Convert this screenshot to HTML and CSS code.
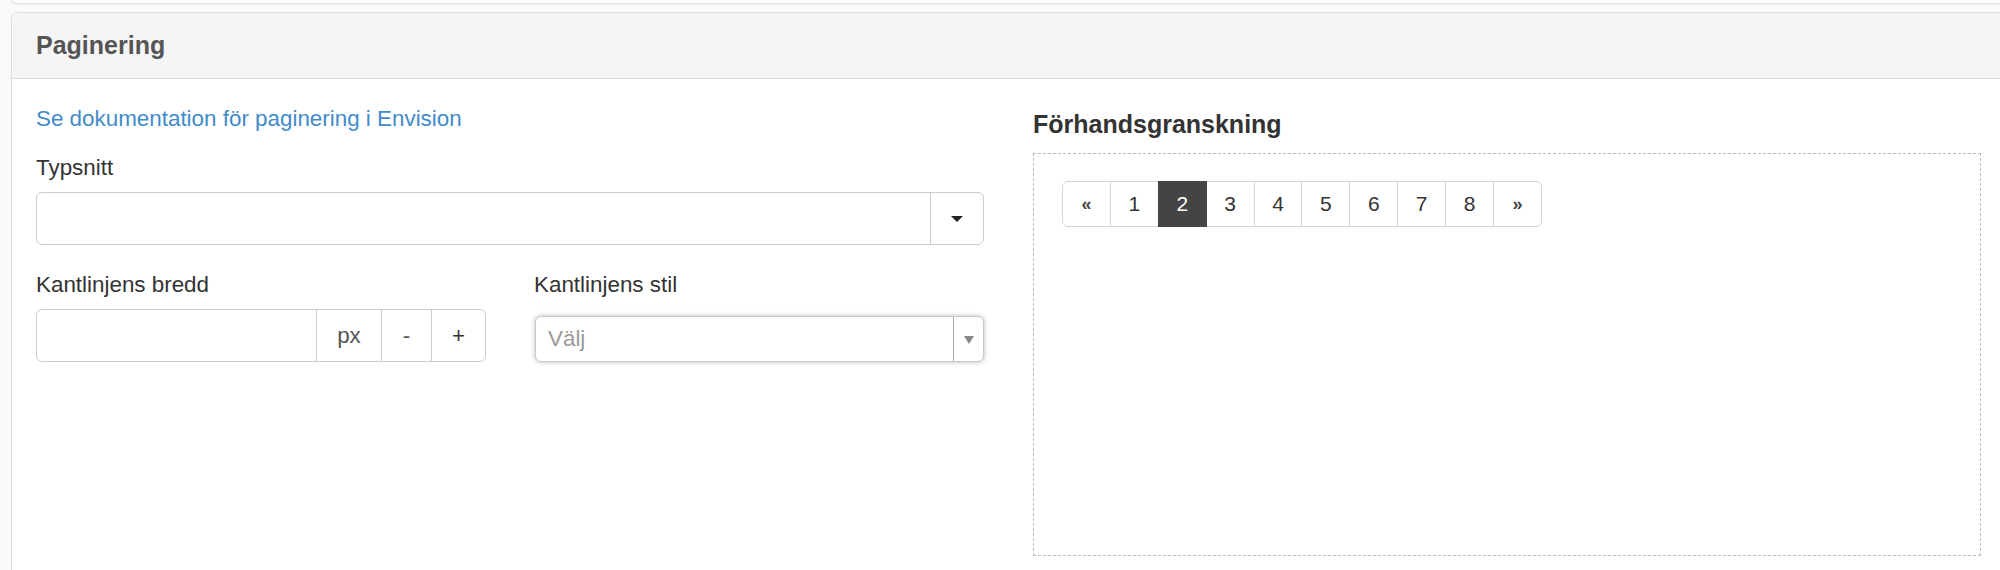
FILE: index.html
```html
<!DOCTYPE html>
<html lang="sv">
<head>
<meta charset="utf-8">
<title>Paginering</title>
<link rel="stylesheet" href="styles.css">
</head>
<body>
<div class="prev-panel"></div>
<section class="panel">
  <div class="panel-heading">Paginering</div>
  <div class="panel-body">
    <div class="col">
      <a class="doc-link" href="#">Se dokumentation för paginering i Envision</a>
      <div class="form-group">
        <label class="lbl">Typsnitt</label>
        <div class="select-box">
          <div class="select-value"></div>
          <div class="select-btn"><span class="caret"></span></div>
        </div>
      </div>
      <div class="form-row">
        <div class="form-group">
          <label class="lbl">Kantlinjens bredd</label>
          <div class="input-group">
            <div class="ig-input"></div>
            <div class="ig-addon ig-px">px</div>
            <div class="ig-addon ig-minus">-</div>
            <div class="ig-addon ig-plus">+</div>
          </div>
        </div>
        <div class="form-group">
          <label class="lbl">Kantlinjens stil</label>
          <div class="chosen">
            <span class="chosen-placeholder">Välj</span>
            <div class="chosen-btn"><span class="chosen-caret"></span></div>
          </div>
        </div>
      </div>
    </div>
    <div class="col">
      <h4 class="preview-title">Förhandsgranskning</h4>
      <div class="preview">
        <ul class="pagination">
          <li class="pg first">«</li>
          <li class="pg">1</li>
          <li class="pg active">2</li>
          <li class="pg">3</li>
          <li class="pg">4</li>
          <li class="pg">5</li>
          <li class="pg">6</li>
          <li class="pg">7</li>
          <li class="pg">8</li>
          <li class="pg last">»</li>
        </ul>
      </div>
    </div>
  </div>
</section>
</body>
</html>
```
FILE: styles.css
```css
html, body {
  margin: 0;
  padding: 0;
  overflow: hidden;
}
body {
  background: #f9f9f9;
  font-family: "Liberation Sans", Arial, Helvetica, sans-serif;
  color: #333;
  width: 2000px;
  height: 570px;
}
.prev-panel {
  margin-left: 11px;
  width: 1996px;
  height: 12px;
  margin-top: -9px;
  background: #fff;
  border: 1px solid #e2e2e2;
  border-top: none;
  border-radius: 0 0 6px 6px;
  box-shadow: 0 1px 2px rgba(0, 0, 0, 0.04);
}
.panel {
  margin: 8px 0 0 11px;
  width: 1996px;
  height: 559px;
  background: #fff;
  border: 1px solid #ddd;
  border-bottom: 0;
  border-radius: 6px 6px 0 0;
  box-sizing: border-box;
  overflow: hidden;
}
.panel-heading {
  background: #f5f5f5;
  border-bottom: 1px solid #ddd;
  padding: 16px 24px;
  height: 33px;
  line-height: 33px;
  font-size: 25px;
  font-weight: bold;
  color: #555;
}
.panel-body {
  padding: 24px;
  display: grid;
  grid-template-columns: 948px 948px;
  column-gap: 49px;
}
.col {
  display: flex;
  flex-direction: column;
  align-items: stretch;
}
.doc-link {
  display: block;
  font-size: 22.4px;
  line-height: 32px;
  color: #428bca;
  text-decoration: none;
  margin-bottom: 17px;
  align-self: flex-start;
}
.form-group {
  display: flex;
  flex-direction: column;
  margin-bottom: 24px;
}
.lbl {
  display: block;
  font-size: 22.4px;
  line-height: 32px;
  color: #333;
  margin-bottom: 8px;
}
.select-box {
  display: flex;
  height: 53px;
  box-sizing: border-box;
  border: 1px solid #ccc;
  border-radius: 6px;
  background: #fff;
}
.select-value {
  flex: 1;
}
.select-btn {
  width: 52px;
  border-left: 1px solid #ccc;
  display: flex;
  align-items: center;
  justify-content: center;
}
.caret {
  width: 0;
  height: 0;
  border-left: 6px solid transparent;
  border-right: 6px solid transparent;
  border-top: 6px solid #222;
  margin-top: 1px;
}
.form-row {
  display: grid;
  grid-template-columns: 450px 450px;
  column-gap: 48px;
}
.input-group {
  display: flex;
  height: 53px;
  box-sizing: border-box;
  border: 1px solid #ccc;
  border-radius: 6px;
  background: #fff;
}
.ig-input {
  flex: 1;
}
.ig-addon {
  border-left: 1px solid #ccc;
  display: flex;
  align-items: center;
  justify-content: center;
  font-size: 22.4px;
  color: #555;
}
.ig-px {
  width: 64px;
}
.ig-minus {
  width: 49px;
}
.ig-plus {
  width: 53px;
  color: #333;
}
.chosen {
  margin-top: 7px;
  margin-left: 1px;
  height: 46px;
  box-sizing: border-box;
  border: 1px solid #c8c8c8;
  border-radius: 6px;
  background: #fff;
  box-shadow: 0 0 5px rgba(0, 0, 0, 0.28);
  display: flex;
  align-items: center;
}
.chosen-placeholder {
  flex: 1;
  padding-left: 12px;
  font-size: 22.4px;
  color: #999;
}
.chosen-btn {
  width: 29px;
  height: 100%;
  border-left: 1px solid #aaa;
  display: flex;
  align-items: center;
  justify-content: center;
}
.chosen-caret {
  width: 0;
  height: 0;
  border-left: 5px solid transparent;
  border-right: 5px solid transparent;
  border-top: 8px solid #888;
  margin-top: 2px;
}
.preview-title {
  margin: 7px 0 15px 0;
  font-size: 25px;
  line-height: 28px;
  font-weight: bold;
  color: #333;
}
.preview {
  height: 403px;
  box-sizing: border-box;
  border: 1px dashed #bbb;
  padding: 27px 28px;
}
.pagination {
  display: flex;
  margin: 0;
  padding: 0;
  list-style: none;
}
.pg {
  width: 48.9px;
  height: 46px;
  box-sizing: border-box;
  border: 1px solid #d4d4d4;
  margin-left: -1px;
  display: flex;
  align-items: center;
  justify-content: center;
  font-size: 21px;
  color: #333;
  background: #fff;
}
.pg.first {
  margin-left: 0;
  border-radius: 6px 0 0 6px;
  font-size: 18px;
  font-weight: bold;
  color: #444;
}
.pg.last {
  border-radius: 0 6px 6px 0;
  font-size: 18px;
  font-weight: bold;
  color: #444;
}
.pg.active {
  background: #444;
  border-color: #444;
  color: #fff;
  position: relative;
  z-index: 1;
}
```
